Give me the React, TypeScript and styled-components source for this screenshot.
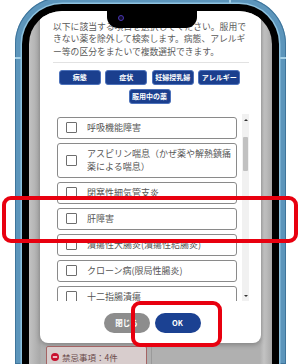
import React from "react";
import styled, { createGlobalStyle } from "styled-components";

const GlobalStyle = createGlobalStyle`
  html, body {
    margin: 0;
    padding: 0;
    width: 299px;
    height: 364px;
    overflow: hidden;
    background: #ffffff;
    font-family: "Noto Sans CJK JP", "Noto Sans", sans-serif;
  }
`;

const Frame = styled.div`
  position: relative;
  box-sizing: border-box;
  margin: -3px 0 0 15px;
  width: 271px;
  height: 367px;
  padding: 7px 7px 0;
  border-radius: 47px 47px 0 0;
  background: #5c95bb;
  box-shadow: inset 0 0 0 1px #3f759b;
`;

const Antenna = styled.div<{ $vertical?: boolean }>`
  position: absolute;
  background: #a5d0e6;
  ${({ $vertical }) =>
    $vertical
      ? `top: 0; left: 214px; width: 1.5px; height: 7px;`
      : `top: 60px; left: 0; width: 100%; height: 1.5px;`}
`;

const Bezel = styled.div`
  position: relative;
  box-sizing: border-box;
  height: 100%;
  padding: 7px 7px 0;
  border-radius: 40px 40px 0 0;
  background: #000;
  box-shadow: 0 0 0 1.5px #8dc2df;
`;

const Notch = styled.div`
  position: absolute;
  top: 0;
  left: 85px;
  width: 90px;
  height: 24px;
  background: #000;
  border-radius: 0 0 11px 11px;
  z-index: 3;
`;

const Camera = styled.div`
  position: absolute;
  top: 11px;
  left: 11px;
  width: 4px;
  height: 4px;
  border-radius: 50%;
  border: 1.3px solid #4a37b4;
  background: #120d2a;
`;

const Screen = styled.div`
  position: relative;
  height: 100%;
  overflow: hidden;
  border-radius: 33px 33px 0 0;
  background: linear-gradient(90deg, #c2c2c2 0, #a9a9a9 11px, #b0b0b0 12px, #b0b0b0 231px, #c3c3c3 235px, #a8a8a8 243px);
  display: flex;
  flex-direction: column;
`;

const Modal = styled.div`
  flex-shrink: 0;
  margin: 0 11px;
  height: 332px;
  box-sizing: border-box;
  padding: 9.5px 12px 0;
  background: #fff;
  border-radius: 0 0 8px 8px;
  box-shadow: 0 2px 5px rgba(0, 0, 0, 0.25);
  display: flex;
  flex-direction: column;
`;

const Lead = styled.p`
  margin: 0 0 0 1px;
  font-size: 8.8px;
  line-height: 12.5px;
  color: #5a5a5a;
  white-space: nowrap;
`;

const Divider = styled.hr`
  margin: 3.5px 0 0 1px;
  border: none;
  height: 1.5px;
  background: #e2e2e2;
`;

const TagGrid = styled.div`
  margin-top: 6.5px;
  display: flex;
  flex-wrap: wrap;
  justify-content: center;
  column-gap: 4.5px;
  row-gap: 4px;
  padding-right: 2px;
`;

const Tag = styled.button`
  box-sizing: border-box;
  width: 42px;
  height: 15px;
  padding: 0;
  border: 1px solid #4d72bb;
  border-radius: 3px;
  background: #1b3f8e;
  color: #fff;
  font-family: inherit;
  font-size: 7px;
  font-weight: 700;
  line-height: 13px;
  white-space: nowrap;
`;

const ListWrap = styled.div`
  margin: 10px 0 0 5px;
  height: 187px;
  display: flex;
  gap: 5px;
`;

const List = styled.div`
  flex: 1;
  overflow: hidden;
  padding-top: 3px;
  display: flex;
  flex-direction: column;
  gap: 4px;
`;

const Item = styled.label`
  flex-shrink: 0;
  box-sizing: border-box;
  display: flex;
  align-items: center;
  gap: 10px;
  padding: 3.5px 3px 3.5px 8px;
  border: 1px solid #8a8a8a;
  border-radius: 3px;
  background: #fff;
`;

const Box = styled.span`
  flex-shrink: 0;
  box-sizing: border-box;
  width: 11px;
  height: 11px;
  border: 1px solid #6e6e6e;
  border-radius: 1px;
  background: #fff;
`;

const ItemText = styled.span`
  font-size: 9px;
  line-height: 13px;
  color: #555;
`;

const Scrollbar = styled.div`
  position: relative;
  width: 7px;
  background: #f1f1f1;
`;

const Arrow = styled.span<{ $down?: boolean }>`
  position: absolute;
  left: 1.5px;
  width: 0;
  height: 0;
  border-left: 2px solid transparent;
  border-right: 2px solid transparent;
  ${({ $down }) =>
    $down
      ? `bottom: 4px; border-top: 2.5px solid #333;`
      : `top: 5px; border-bottom: 2.5px solid #333;`}
`;

const Thumb = styled.span`
  position: absolute;
  left: 1px;
  width: 5px;
  border-radius: 1px;
  background: #c1c1c1;
`;

const Actions = styled.div`
  margin-top: 12px;
  display: flex;
  justify-content: center;
  gap: 5px;
  padding-left: 3px;
`;

const PillButton = styled.button<{ $primary?: boolean }>`
  width: 46px;
  height: 20px;
  padding: 0;
  border: none;
  border-radius: 10px;
  background: ${({ $primary }) => ($primary ? "#1b4192" : "#8d8d8d")};
  color: #fff;
  font-family: inherit;
  font-size: 7.5px;
  font-weight: 700;
`;

const Footer = styled.div`
  margin-top: 3px;
  display: flex;
  align-items: flex-start;
  padding-left: 17px;
`;

const Alert = styled.div`
  box-sizing: border-box;
  width: 101px;
  height: 24px;
  display: flex;
  align-items: flex-start;
  gap: 3px;
  padding: 3.5px 0 0 4px;
  border: 1px solid #a46464;
  border-radius: 2px;
  background: #d8cdcd;
  font-size: 8.5px;
  line-height: 12px;
  color: #6a4a4a;
`;

const Rule = styled.div`
  margin-left: 4px;
  width: 1px;
  height: 24px;
  background: #9a9a9a;
`;

const Highlight = styled.div<{ $x: number; $y: number; $w: number; $h: number }>`
  position: absolute;
  left: ${({ $x }) => $x}px;
  top: ${({ $y }) => $y}px;
  width: ${({ $w }) => $w}px;
  height: ${({ $h }) => $h}px;
  box-sizing: border-box;
  border: 4.5px solid #e8000f;
  border-radius: 9px;
  z-index: 10;
  pointer-events: none;
`;

const tags = ["病態", "症状", "妊婦授乳婦", "アレルギー", "服用中の薬"];

const items = [
  "呼吸機能障害",
  "アスピリン喘息（かぜ薬や解熱鎮痛薬による喘息）",
  "閉塞性細気管支炎",
  "肝障害",
  "潰瘍性大腸炎(潰瘍性結腸炎)",
  "クローン病(限局性腸炎)",
  "十二指腸潰瘍",
];

const MinusIcon: React.FC = () => (
  <svg width="8" height="8" viewBox="0 0 8 8" style={{ marginTop: 2 }}>
    <circle cx="4" cy="4" r="4" fill="#c8102e" />
    <rect x="1.8" y="3.3" width="4.4" height="1.4" fill="#fff" />
  </svg>
);

const App: React.FC = () => {
  return (
    <>
      <GlobalStyle />
      <Frame>
        <Antenna $vertical />
        <Antenna />
        <Bezel>
          <Notch>
            <Camera />
          </Notch>
          <Screen>
            <Modal>
              <Lead>
                以下に該当する項目を選択してください。服用で
                <br />
                きない薬を除外して検索します。病態、アレルギ
                <br />
                ー等の区分をまたいで複数選択できます。
              </Lead>
              <Divider />
              <TagGrid>
                {tags.map((t) => (
                  <Tag key={t}>{t}</Tag>
                ))}
              </TagGrid>
              <ListWrap>
                <List>
                  {items.map((label) => (
                    <Item key={label}>
                      <Box />
                      <ItemText>{label}</ItemText>
                    </Item>
                  ))}
                </List>
                <Scrollbar>
                  <Arrow />
                  <Thumb style={{ top: 23, height: 34 }} />
                  <Arrow $down />
                </Scrollbar>
              </ListWrap>
              <Actions>
                <PillButton>閉じる</PillButton>
                <PillButton $primary>OK</PillButton>
              </Actions>
            </Modal>
            <Footer>
              <Alert>
                <MinusIcon />
                <span>禁忌事項：4件</span>
              </Alert>
              <Rule />
            </Footer>
          </Screen>
        </Bezel>
      </Frame>
      <Highlight $x={2} $y={196} $w={296} $h={47} />
      <Highlight $x={131} $y={301} $w={91} $h={46} />
    </>
  );
};

export default App;
